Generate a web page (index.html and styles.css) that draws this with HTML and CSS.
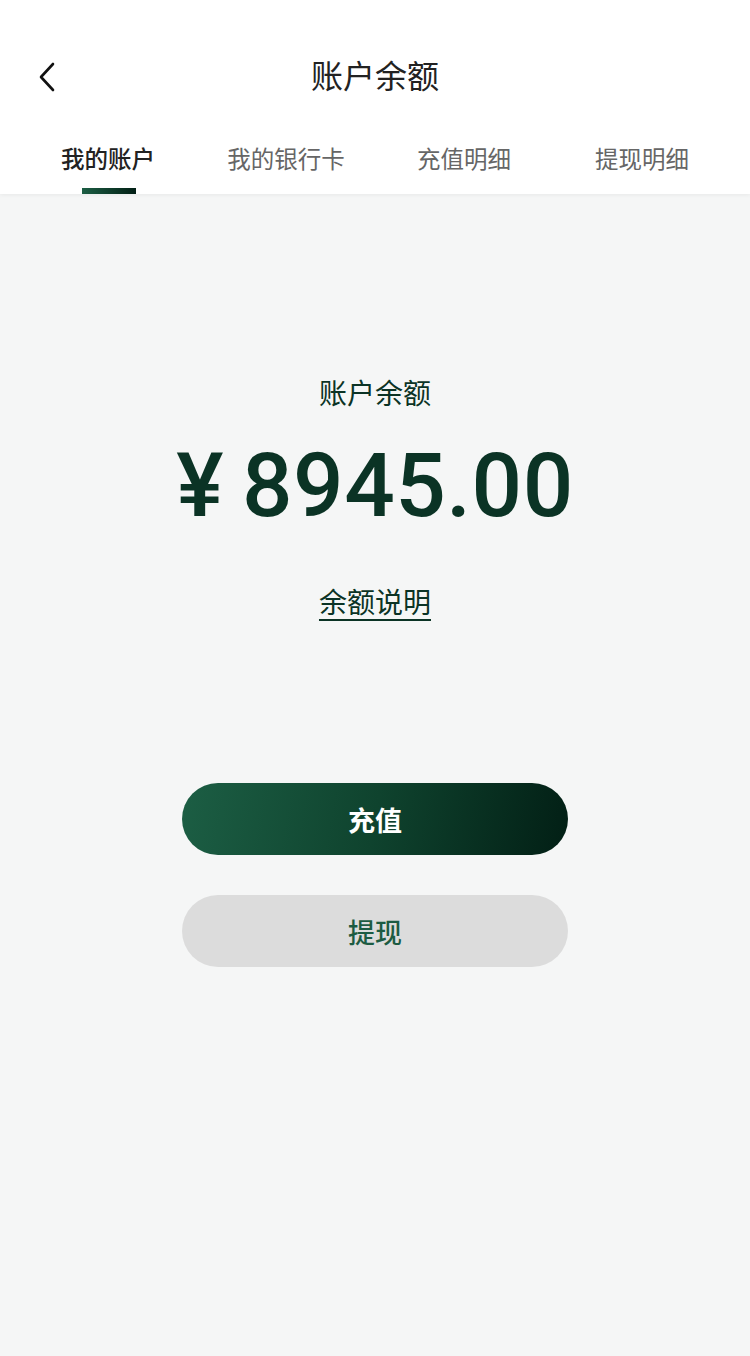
FILE: index.html
```html
<!DOCTYPE html>
<html lang="zh">
<head>
<meta charset="utf-8">
<link rel="stylesheet" href="styles.css">
</head>
<body>
<div class="page">
  <header class="header">
    <div class="nav">
      <span class="back">
        <svg width="20" height="30" viewBox="0 0 20 30"><path d="M16 2 L4 15 L16 28" fill="none" stroke="#111" stroke-width="2.6" stroke-linecap="round" stroke-linejoin="round"/></svg>
      </span>
      <h1 class="title">账户余额</h1>
    </div>
    <nav class="tabs">
      <div class="tab active">我的账户<span class="bar"></span></div>
      <div class="tab">我的银行卡</div>
      <div class="tab">充值明细</div>
      <div class="tab">提现明细</div>
    </nav>
  </header>
  <main class="main">
    <div class="label">账户余额</div>
    <div class="amount"><span class="yen">¥</span>8945.00</div>
    <a class="explain">余额说明</a>
    <div class="actions">
      <button class="btn primary">充值</button>
      <button class="btn secondary">提现</button>
    </div>
  </main>
</div>
</body>
</html>
```
FILE: styles.css
```css
* { box-sizing: border-box; margin: 0; padding: 0; }
html, body { width: 750px; height: 1356px; }
body {
  font-family: "Noto Sans CJK SC", "Noto Sans", sans-serif;
  background: #f5f6f6;
}
.page { display: flex; flex-direction: column; min-height: 1356px; }
.header {
  background: #fff;
  height: 194px;
  display: flex;
  flex-direction: column;
  box-shadow: 0 1px 4px rgba(0,0,0,0.06);
  position: relative;
  z-index: 1;
}
.nav {
  height: 124px;
  padding-top: 34px;
  position: relative;
  display: flex;
  justify-content: center;
}
.back {
  position: absolute;
  left: 37px;
  top: 62px;
  width: 20px;
  height: 30px;
  display: flex;
}
.title {
  font-size: 32px;
  font-weight: 400;
  color: #222;
  line-height: 80px;
  height: 80px;
}
.tabs {
  display: grid;
  grid-template-columns: repeat(4, 1fr);
  padding: 0 19px;
  height: 70px;
}
.tab {
  position: relative;
  text-align: center;
  font-size: 23.5px;
  color: #666;
  line-height: 32px;
  padding-top: 18px;
}
.tab.active { color: #222; font-weight: 500; }
.bar {
  position: absolute;
  left: 50%;
  margin-left: -26px;
  bottom: 0;
  width: 54px;
  height: 6px;
  background: linear-gradient(90deg, #1c5e44, #021f15);
}
.main {
  flex: 1;
  display: flex;
  flex-direction: column;
  align-items: center;
  padding-top: 178px;
}
.label {
  font-size: 28px;
  color: #0b3325;
  line-height: 40px;
}
.amount {
  margin-top: 24px;
  font-family: Roboto, "Liberation Sans", sans-serif;
  font-weight: 500;
  font-size: 89px;
  color: #0b3325;
  line-height: 100px;
  letter-spacing: 0.5px;
}
.yen { margin-right: 18px; }
.explain {
  margin-top: 45px;
  font-size: 28px;
  color: #0b3325;
  line-height: 40px;
  text-decoration: underline;
  text-underline-offset: 6px;
  text-decoration-thickness: 2px;
}
.actions {
  margin-top: 162px;
  display: flex;
  flex-direction: column;
  gap: 40px;
}
.btn {
  width: 386px;
  height: 72px;
  border: none;
  border-radius: 36px;
  font-family: "Noto Sans CJK SC", sans-serif;
  font-size: 27px;
  font-weight: 700;
}
.primary {
  color: #fff;
  background: linear-gradient(100deg, #1c5e44 0%, #0f432e 50%, #021f15 100%);
}
.secondary {
  color: #1c5b42;
  background: #dcdcdc;
  font-weight: 500;
}
```
